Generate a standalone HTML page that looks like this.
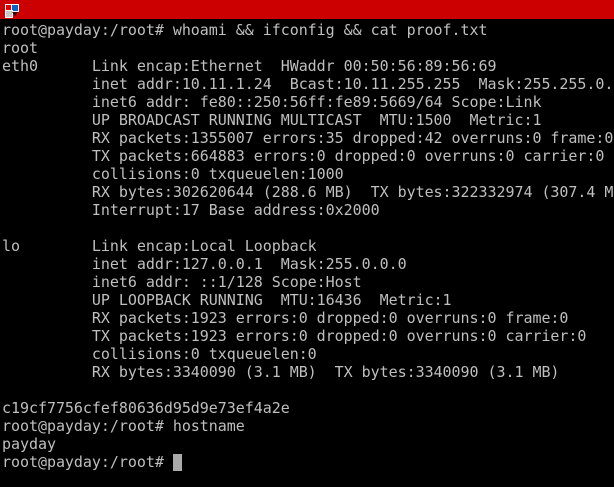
<!DOCTYPE html>
<html><head><style>
html,body{margin:0;padding:0;background:#000;width:614px;height:487px;overflow:hidden}
.bar{position:absolute;left:0;top:0;width:614px;height:19px;background:#cc0000}
.ic{position:absolute}
pre{position:absolute;left:2px;top:21px;margin:0;font-family:"DejaVu Sans Mono","Liberation Mono",monospace;font-size:15px;letter-spacing:-0.04px;line-height:18px;color:#bfbfbf;white-space:pre}
.cur{display:inline-block;width:9px;height:17px;background:#aaa;vertical-align:-4px}
</style></head><body>
<div class="bar"></div>
<div class="ic" style="left:5px;top:4px;width:6px;height:6px;background:#e00000;border:1px solid #fff"></div>
<div class="ic" style="left:11px;top:4px;width:6px;height:6px;background:#0066cc;border:1px solid #fff"></div>
<div class="ic" style="left:5px;top:10px;width:6px;height:6px;background:#c8c8c8;border:1px solid #fff"></div>
<div class="ic" style="left:12px;top:12px;width:0;height:0;border-left:3px solid transparent;border-right:3px solid transparent;border-top:4px solid #300"></div>
<pre>root@payday:/root# whoami &amp;&amp; ifconfig &amp;&amp; cat proof.txt
root
eth0      Link encap:Ethernet  HWaddr 00:50:56:89:56:69
          inet addr:10.11.1.24  Bcast:10.11.255.255  Mask:255.255.0.0
          inet6 addr: fe80::250:56ff:fe89:5669/64 Scope:Link
          UP BROADCAST RUNNING MULTICAST  MTU:1500  Metric:1
          RX packets:1355007 errors:35 dropped:42 overruns:0 frame:0
          TX packets:664883 errors:0 dropped:0 overruns:0 carrier:0
          collisions:0 txqueuelen:1000
          RX bytes:302620644 (288.6 MB)  TX bytes:322332974 (307.4 MB)
          Interrupt:17 Base address:0x2000

lo        Link encap:Local Loopback
          inet addr:127.0.0.1  Mask:255.0.0.0
          inet6 addr: ::1/128 Scope:Host
          UP LOOPBACK RUNNING  MTU:16436  Metric:1
          RX packets:1923 errors:0 dropped:0 overruns:0 frame:0
          TX packets:1923 errors:0 dropped:0 overruns:0 carrier:0
          collisions:0 txqueuelen:0
          RX bytes:3340090 (3.1 MB)  TX bytes:3340090 (3.1 MB)

c19cf7756cfef80636d95d9e73ef4a2e
root@payday:/root# hostname
payday
root@payday:/root# <span class="cur"></span></pre>
</body></html>
